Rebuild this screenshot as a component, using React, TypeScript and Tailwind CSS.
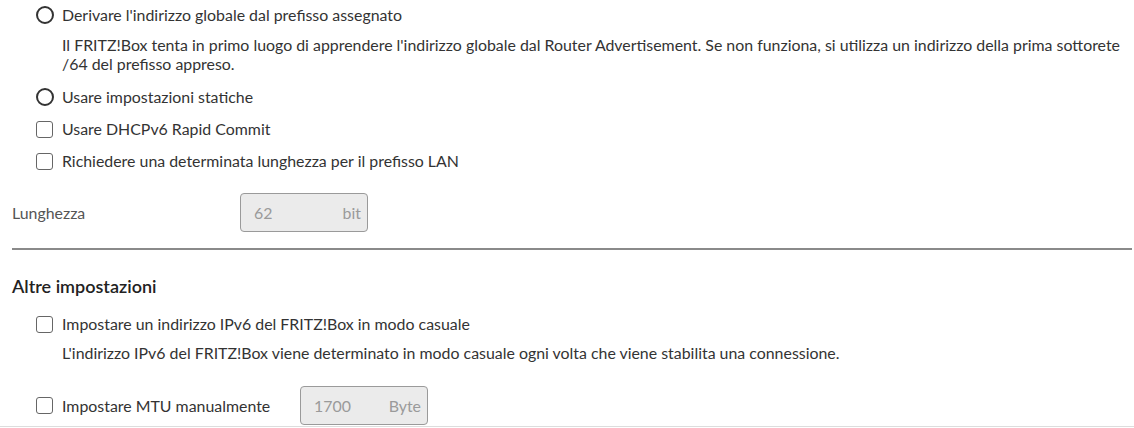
import React from "react";

const font = { fontFamily: '"Source Sans Pro", Lato, "Noto Sans", sans-serif' };

function Radio({ label }: { label: string }) {
  return (
    <label className="flex items-center gap-[8px] h-[20px] text-[15.9px] text-[#333]">
      <span className="w-[18px] h-[18px] rounded-full border-2 border-[#333] shrink-0" />
      <span>{label}</span>
    </label>
  );
}

function Check({ label }: { label: string }) {
  return (
    <label className="flex items-center gap-[9px] h-[20px] text-[15.9px] text-[#333]">
      <span className="w-[17px] h-[17px] rounded-[3px] border border-[#666] shrink-0" />
      <span>{label}</span>
    </label>
  );
}

function UnitInput({ value, unit }: { value: string; unit: string }) {
  return (
    <div className="w-[128px] h-[39px] rounded-[4px] border border-[#9a9a9a] bg-[#ebebeb] flex items-center justify-between pl-[13px] pr-[6px] text-[15.9px] text-[#9a9a9a]">
      <span>{value}</span>
      <span>{unit}</span>
    </div>
  );
}

export default function App() {
  return (
    <div className="w-[1134px] h-[428px] bg-white overflow-hidden" style={font}>
      <div className="pl-[12px] pr-[2px]">
        <div className="pl-[24px] pt-[5px]">
          <Radio label="Derivare l'indirizzo globale dal prefisso assegnato" />
          <p className="pl-[26px] mt-[10px] text-[15.9px] leading-[19px] text-[#333]">
            Il FRITZ!Box tenta in primo luogo di apprendere l'indirizzo globale dal Router Advertisement. Se non funziona, si utilizza un indirizzo della prima sottorete /64 del prefisso appreso.
          </p>
          <div className="mt-[14px]">
            <Radio label="Usare impostazioni statiche" />
          </div>
          <div className="mt-[12px]">
            <Check label="Usare DHCPv6 Rapid Commit" />
          </div>
          <div className="mt-[12px]">
            <Check label="Richiedere una determinata lunghezza per il prefisso LAN" />
          </div>
        </div>
        <div className="flex items-center mt-[22px]">
          <span className="w-[228px] text-[15.9px] text-[#555]">Lunghezza</span>
          <UnitInput value="62" unit="bit" />
        </div>
        <div className="mt-[16px] h-[2px] bg-[#8a8a8a]" />
        <h2 className="mt-[23px] text-[18px] leading-[27px] font-semibold text-[#222]">Altre impostazioni</h2>
        <div className="pl-[24px] mt-[14px]">
          <Check label="Impostare un indirizzo IPv6 del FRITZ!Box in modo casuale" />
          <p className="pl-[26px] mt-[9px] text-[15.9px] leading-[19px] text-[#333]">
            L'indirizzo IPv6 del FRITZ!Box viene determinato in modo casuale ogni volta che viene stabilita una connessione.
          </p>
          <div className="flex items-center mt-[24px]">
            <div className="w-[264px]">
              <Check label="Impostare MTU manualmente" />
            </div>
            <UnitInput value="1700" unit="Byte" />
          </div>
        </div>
      </div>
      <div className="mt-[1px] h-px bg-[#ddd]" />
    </div>
  );
}
